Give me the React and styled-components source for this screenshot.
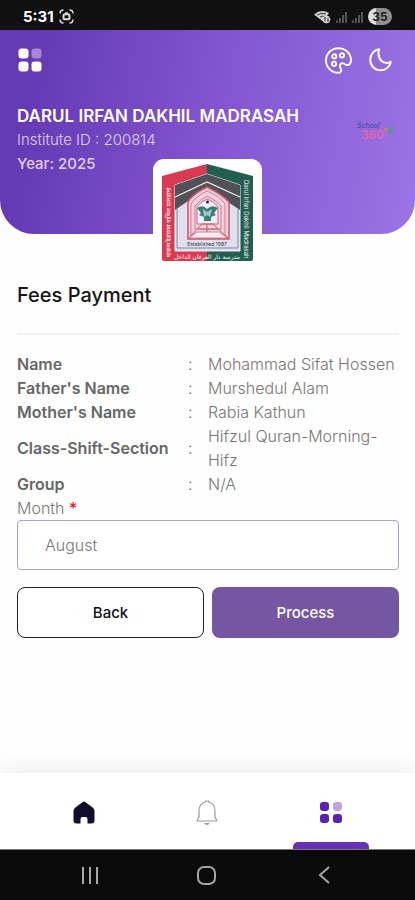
import React from "react";
import styled, { createGlobalStyle } from "styled-components";

const GlobalStyle = createGlobalStyle`
  *, *::before, *::after { box-sizing: border-box; }
  body {
    margin: 0;
    background: #fefefe;
    color: #777;
    font-family: Inter, "Noto Sans", sans-serif;
    font-size: 16px;
    line-height: 24px;
  }
  button, select { font: inherit; }
`;

const Screen = styled.div`
  min-height: 100vh;
  display: flex;
  flex-direction: column;
`;

const StatusBar = styled.div`
  height: 30px;
  padding: 3px 23px 0 23px;
  display: flex;
  align-items: center;
  justify-content: space-between;
  background: #101010;
  color: #fff;
`;

const StatusGroup = styled.div`
  display: flex;
  align-items: center;
  gap: 5px;
`;

const Clock = styled.span`
  font-size: 15px;
  font-weight: 700;
  line-height: 20px;
`;

const Battery = styled.span`
  width: 24px;
  height: 17px;
  border-radius: 9px;
  background: linear-gradient(90deg, #dedede 35%, #8f8f8f 35%);
  color: #222;
  font-size: 12px;
  font-weight: 700;
  line-height: 17px;
  text-align: center;
`;

const Header = styled.header`
  height: 204px;
  padding: 15px 17px 0;
  display: flex;
  flex-direction: column;
  border-radius: 0 0 34px 34px;
  background: linear-gradient(100deg, #6539b4 8%, #8356cf 52%, #9b74e6 100%);
  color: #fff;
`;

const Toolbar = styled.div`
  display: flex;
  align-items: center;
  justify-content: space-between;
`;

const ToolGroup = styled.div`
  padding-right: 3px;
  display: flex;
  gap: 12px;
`;

const IconButton = styled.button`
  width: ${(p) => p.$width || 30}px;
  height: 30px;
  padding: 0;
  border: 0;
  display: grid;
  place-items: center;
  background: none;
  color: inherit;
  cursor: pointer;
`;

const Institute = styled.div`
  margin-top: 29px;
  display: flex;
  justify-content: space-between;
  align-items: flex-start;
`;

const InstituteName = styled.h1`
  margin: 0;
  font-size: 17px;
  line-height: 24px;
  font-weight: 600;
`;

const InstituteLine = styled.p`
  margin: 0;
  font-size: 15px;
  line-height: 24px;
  font-weight: ${(p) => (p.$strong ? 500 : 300)};
  color: #e0d0fa;
`;

const Brand = styled.div`
  padding: 17px 4px 0 0;
  display: flex;
`;

const LogoCard = styled.div`
  width: 109px;
  height: 105px;
  margin: -75px auto 0;
  padding: 4px 0 0;
  display: flex;
  justify-content: center;
  border-radius: 11px;
  background: #fff;
`;

const Main = styled.main`
  flex: 1;
  padding: 16px 16px 24px 17px;
`;

const PageTitle = styled.h2`
  margin: 0;
  padding-bottom: 23px;
  border-bottom: 2px solid #f2f2f2;
  color: #151515;
  font-size: 20px;
  line-height: 30px;
  font-weight: 500;
`;

const Details = styled.table`
  width: 100%;
  margin-top: 17px;
  border-collapse: collapse;
`;

const Term = styled.th`
  width: 171px;
  padding: 0;
  text-align: left;
  font-size: 16px;
  font-weight: 600;
  color: #666;
`;

const Colon = styled.td`
  width: 20px;
  padding: 0;
  font-weight: 300;
`;

const Value = styled.td`
  padding: 0;
  font-weight: 300;
`;

const FieldLabel = styled.label`
  display: block;
  font-size: 16px;
  font-weight: 300;
`;

const Required = styled.span`
  color: #e01b1b;
  font-weight: 500;
`;

const MonthSelect = styled.select`
  appearance: none;
  display: block;
  width: 100%;
  height: 50px;
  padding: 0 27px;
  border: 1px solid #aaa3cf;
  border-radius: 4px;
  background: #fff;
  color: #777;
  font-size: 16px;
  font-weight: 300;
`;

const Actions = styled.div`
  margin-top: 17px;
  display: grid;
  grid-template-columns: 1fr 1fr;
  gap: 8px;
`;

const ActionButton = styled.button`
  height: 51px;
  border: ${(p) => (p.$primary ? "0" : "1px solid #222")};
  border-radius: 8px;
  background: ${(p) => (p.$primary ? "#7556a3" : "#fff")};
  color: ${(p) => (p.$primary ? "#fff" : "#111")};
  font-size: 15px;
  font-weight: 500;
  cursor: pointer;
`;

const TabBar = styled.nav`
  height: 76px;
  padding: 0 22px;
  display: grid;
  grid-template-columns: repeat(3, 1fr);
  background: #fff;
  box-shadow: 0 -4px 20px rgba(0, 0, 0, 0.07);
`;

const Tab = styled.a`
  display: flex;
  flex-direction: column;
  align-items: center;
  justify-content: space-between;
  padding-top: 25px;
  color: ${(p) => p.$color};
`;

const ActiveMark = styled.span`
  width: 76px;
  height: 7px;
  border-radius: 5px 5px 0 0;
  background: #6532b5;
`;

const SystemBar = styled.div`
  height: 51px;
  padding: 0 32px 0 31px;
  display: grid;
  grid-template-columns: repeat(3, 1fr);
  place-items: center;
  border-top: 1px solid #777;
  background: #0a0a0a;
  color: #a6a6a6;
`;

const GridIcon = ({ size, faded }) => (
  <svg width={size} height={size} viewBox="0 0 24 24" fill="currentColor" aria-hidden="true">
    <rect x="0.5" y="0.5" width="10" height="10" rx="3" />
    <rect x="13.5" y="0.5" width="10" height="10" rx="3" opacity={faded} />
    <rect x="0.5" y="13.5" width="10" height="10" rx="3" />
    <rect x="13.5" y="13.5" width="10" height="10" rx="3" />
  </svg>
);

const CaptureIcon = () => (
  <svg width="15" height="15" viewBox="0 0 15 15" fill="none" stroke="#ddd" strokeWidth="1.5" aria-hidden="true">
    <path d="M1 4.5Q1 1 4.5 1M10.5 1Q14 1 14 4.5M14 10.5Q14 14 10.5 14M4.5 14Q1 14 1 10.5" />
    <rect x="4.5" y="5.2" width="6" height="5" rx="1.5" strokeWidth="2" />
    <path d="M6 4h3" />
  </svg>
);

const WifiIcon = () => (
  <svg width="17" height="14" viewBox="0 0 17 14" aria-hidden="true">
    <path d="M0 4.5Q7-1.5 15 3L9 11.5Z" fill="#d0d0d0" />
    <path d="M3 5q5-3 9-1M6 7q3-2 5 0" fill="none" stroke="#333" />
    <circle cx="12.5" cy="9.5" r="3.8" fill="#ddd" />
    <path d="M11 11.5v-4m-1 1 1-1 1 1M14 7.5v4m-1-1 1 1 1-1" fill="none" stroke="#222" strokeWidth=".9" />
  </svg>
);

const SignalIcon = () => (
  <svg width="11" height="12" viewBox="0 0 11 12" stroke="#777" strokeWidth="1.3" aria-hidden="true">
    <path d="M1 12V9.5M4 12V7M7 12V4M10 12V1" />
  </svg>
);

const PaletteIcon = () => (
  <svg width="27" height="27" viewBox="0 0 27 27" fill="none" stroke="currentColor" strokeWidth="1.9" strokeLinejoin="round" aria-hidden="true">
    <path d="M13.5 1.2C6.4 1.2 1 6.6 1 13.4s5.7 12.4 12 12.4c2.3 0 3.6-1.4 3.1-3.2-.4-1.5-1.4-2.1-1.1-4.1.4-2 2.2-2.8 3.7-2 1.9 1.1 2.5 2 4.3 1.5 2-.6 3-2.3 3-4.8C26 6.6 20.6 1.2 13.5 1.2Z" />
    <circle cx="9.3" cy="9.4" r="2.1" />
    <circle cx="17" cy="8.4" r="2.1" />
    <circle cx="9" cy="16.9" r="2.1" />
  </svg>
);

const MoonIcon = () => (
  <svg width="23" height="24" viewBox="0 0 23 24" fill="none" stroke="currentColor" strokeWidth="2" strokeLinejoin="round" aria-hidden="true">
    <path d="M10 1.3C4.8 2.2 1.2 6.4 1.2 11.8c0 6 4.6 10.5 10.2 10.5 5.1 0 9.2-3.4 10.4-8.4-2.5 1.4-6.6 1.5-9.4-1.2C9.3 9.7 9 5.4 10 1.3Z" />
  </svg>
);

const BrandLogo = () => (
  <svg width="38" height="24" viewBox="0 0 38 24" role="img" aria-label="School 360">
    <text x="1" y="7" fill="#3546a8" fontFamily="Inter, sans-serif" fontSize="7" fontStyle="italic">School</text>
    <text x="5" y="18" fill="#e9669f" fontFamily="Inter, sans-serif" fontSize="12" fontWeight="500">360</text>
    <circle cx="30" cy="9" r="1.7" fill="none" stroke="#ef715f" />
    <path d="M32 12q0-4 5-6-1 6-5 6ZM31 13l5-1" fill="#4b9b8b" stroke="#4b9b8b" strokeWidth=".8" />
  </svg>
);

const InstituteLogo = () => (
  <svg width="93" height="99" viewBox="0 0 93 99" role="img" aria-label="Darul Irfan Dakhil Madrasah emblem">
    <path d="M1 13 46 1v97H3q-2 0-2-2Z" fill="#d83a52" />
    <path d="M46 1 92 13v83q0 2-2 2H46Z" fill="#235f51" />
    <path d="M14 22 46 11l33 11v66H14Z" fill="#dfe0ed" stroke="#f5eff6" />
    <path d="M14 22 46 11l33 11v25L46 25 14 47Z" fill="#535158" />
    <path d="M14 34 46 19l33 15" fill="none" stroke="#eee" strokeWidth="1.2" />
    <path d="M16 46v39h61V46" fill="none" stroke="#7f8798" />
    <path d="M27 76V39q3-7 19-15 16 8 22 15v37Z" fill="#efd3df" stroke="#d54f6d" strokeWidth="1.5" />
    <path d="M30 73V41q4-7 16-13 14 6 18 13v32ZM34 66V43q5-6 12-10 9 4 14 10v23Z" fill="none" stroke="#dc7890" />
    <path d="M36 61V44q3-5 10-8 8 3 11 8v17Z" fill="#edf0f4" stroke="#d6647c" />
    <path d="m28 75 13-14h11l15 14M33 71h28M38 66h18M46 61v9" fill="none" stroke="#c7586f" />
    <path d="M28 75h38l-8-6H36Z" fill="#f8edf3" stroke="#cd5c74" strokeWidth=".7" />
    <path d="M36 45q6-4 10 1 5-5 11-1l-4 5 2 2-5 2v4h-7v-4l-5-2 2-2Z" fill="#377e77" />
    <path d="m42 46 4 3 5-3-2 8-3-2-3 2Z" fill="#a3c5c2" />
    <circle cx="46.5" cy="39" r="1.5" fill="#182842" />
    <text x="46" y="83" textAnchor="middle" fill="#30303f" fontFamily="Inter, sans-serif" fontSize="5">Established 1987</text>
    <text x="46" y="96" textAnchor="middle" fill="#fff" fontFamily="DejaVu Sans, sans-serif" fontSize="6">مدرسة دار العرفان الداخل</text>
    <text transform="translate(83 17) rotate(90)" fill="#e7efed" fontFamily="Inter, sans-serif" fontSize="6">Darul Irfan Dakhil Madrasah</text>
    <text transform="translate(10 94) rotate(-90)" fill="#fff" fontFamily="Noto Sans Bengali, Noto Sans, sans-serif" fontSize="6">দারুল ইরফান দাখিল মাদরাসা</text>
  </svg>
);

const HomeIcon = () => (
  <svg width="22" height="30" viewBox="0 0 22 30" fill="currentColor" aria-hidden="true">
    <path d="M9.4 4.2q1.6-1.2 3.2 0l7 5.2Q21.5 11 21.5 13v9.5q0 3-3 3h-4V21q0-2-2-2h-3q-2 0-2 2v4.5h-4q-3 0-3-3V13q0-2 1.9-3.6Z" />
  </svg>
);

const BellIcon = () => (
  <svg width="22" height="30" viewBox="0 0 22 30" fill="none" stroke="currentColor" strokeWidth="1.2" strokeLinejoin="round" aria-hidden="true">
    <path d="M9.5 4V3h3v1Q19 5.5 19 13v6l2 4H1l2-4v-6Q3 5.5 9.5 4Z" />
    <path d="M8 25q3 4 6 0Z" fill="currentColor" stroke="none" />
  </svg>
);

const TabGridIcon = () => (
  <svg width="22" height="30" viewBox="0 0 22 30" fill="currentColor" aria-hidden="true">
    <rect x="0" y="4" width="9" height="9" rx="3" />
    <rect x="13" y="4" width="9" height="9" rx="3" opacity="0.4" />
    <rect x="0" y="16" width="9" height="9" rx="3" />
    <rect x="13" y="16" width="9" height="9" rx="3" />
  </svg>
);

const details = [
  ["Name", "Mohammad Sifat Hossen"],
  ["Father's Name", "Murshedul Alam"],
  ["Mother's Name", "Rabia Kathun"],
  ["Class-Shift-Section", "Hifzul Quran-Morning-Hifz"],
  ["Group", "N/A"],
];

export default function App() {
  return (
    <Screen>
      <GlobalStyle />
      <StatusBar>
        <StatusGroup>
          <Clock>5:31</Clock>
          <CaptureIcon />
        </StatusGroup>
        <StatusGroup>
          <WifiIcon />
          <SignalIcon />
          <SignalIcon />
          <Battery>35</Battery>
        </StatusGroup>
      </StatusBar>
      <Header>
        <Toolbar>
          <IconButton $width={25} aria-label="Menu"><GridIcon size={24} faded={0.4} /></IconButton>
          <ToolGroup>
            <IconButton aria-label="Theme colour"><PaletteIcon /></IconButton>
            <IconButton aria-label="Dark mode"><MoonIcon /></IconButton>
          </ToolGroup>
        </Toolbar>
        <Institute>
          <div>
            <InstituteName>DARUL IRFAN DAKHIL MADRASAH</InstituteName>
            <InstituteLine>Institute ID : 200814</InstituteLine>
            <InstituteLine $strong>Year: 2025</InstituteLine>
          </div>
          <Brand><BrandLogo /></Brand>
        </Institute>
      </Header>
      <LogoCard><InstituteLogo /></LogoCard>
      <Main>
        <PageTitle>Fees Payment</PageTitle>
        <Details>
          <tbody>
            {details.map(([term, value]) => (
              <tr key={term}>
                <Term scope="row">{term}</Term>
                <Colon>:</Colon>
                <Value>{value}</Value>
              </tr>
            ))}
          </tbody>
        </Details>
        <FieldLabel htmlFor="month">Month <Required>*</Required></FieldLabel>
        <MonthSelect id="month" defaultValue="August" required>
          <option>August</option>
        </MonthSelect>
        <Actions>
          <ActionButton type="button">Back</ActionButton>
          <ActionButton type="button" $primary>Process</ActionButton>
        </Actions>
      </Main>
      <TabBar>
        <Tab href="#home" aria-label="Home" $color="#140c28"><HomeIcon /></Tab>
        <Tab href="#notifications" aria-label="Notifications" $color="#999"><BellIcon /></Tab>
        <Tab href="#menu" aria-label="Menu" $color="#5b21b0">
          <TabGridIcon />
          <ActiveMark />
        </Tab>
      </TabBar>
      <SystemBar>
        <svg width="18" height="17" viewBox="0 0 18 17" stroke="currentColor" strokeWidth="2" aria-hidden="true">
          <path d="M2 0v17M9 0v17M16 0v17" />
        </svg>
        <svg width="19" height="19" viewBox="0 0 19 19" fill="none" stroke="currentColor" strokeWidth="2" aria-hidden="true">
          <rect x="1" y="1" width="17" height="17" rx="6" />
        </svg>
        <svg width="12" height="18" viewBox="0 0 12 18" fill="none" stroke="currentColor" strokeWidth="2" aria-hidden="true">
          <path d="M11 1 2 9l9 8" />
        </svg>
      </SystemBar>
    </Screen>
  );
}
